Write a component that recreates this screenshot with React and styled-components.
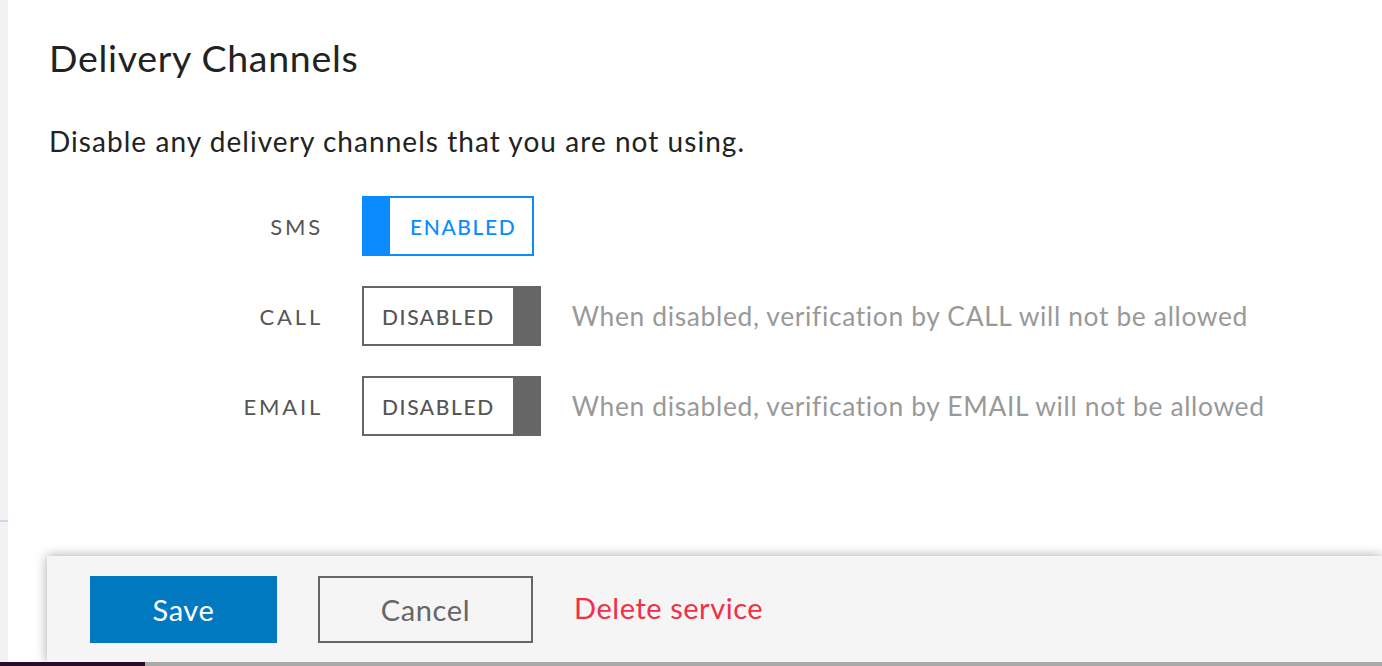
import React from "react";
import styled, { createGlobalStyle } from "styled-components";

const Global = createGlobalStyle`
  html, body { margin: 0; padding: 0; background: #fff; overflow: hidden; }
  body { font-family: Lato, "Open Sans", sans-serif; }
  * { box-sizing: border-box; }
`;

const Page = styled.div`
  width: 1382px;
  height: 666px;
  display: flex;
  flex-direction: column;
`;

const Body = styled.div`
  flex: 1;
  display: flex;
  min-height: 0;
`;

const SideStrip = styled.div`
  width: 8px;
  background: #f2f2f5;
  display: flex;
  flex-direction: column;
`;

const SideTop = styled.div`
  height: 522px;
  border-bottom: 2px solid #d4d3e2;
`;

const Main = styled.div`
  flex: 1;
  display: flex;
  flex-direction: column;
  min-width: 0;
`;

const Content = styled.div`
  flex: 1;
  padding: 34px 0 0 41px;
`;

const Title = styled.h1`
  margin: 0;
  font-size: 37.5px;
  line-height: 48px;
  font-weight: 400;
  letter-spacing: 0.7px;
  color: #222;
`;

const Intro = styled.p`
  margin: 42px 0 0;
  font-size: 28px;
  line-height: 34px;
  letter-spacing: 1.05px;
  color: #222;
`;

const Channels = styled.div`
  margin-top: 38px;
  display: flex;
  flex-direction: column;
  gap: 30px;
`;

const Row = styled.div`
  display: flex;
  align-items: center;
`;

const Label = styled.div`
  width: 274px;
  text-align: right;
  font-size: 22px;
  letter-spacing: 2.8px;
  color: #555;
  margin-right: 39px;
`;

const Toggle = styled.button`
  height: 60px;
  padding: 0;
  display: flex;
  align-items: stretch;
  background: #fff;
  border: 2px solid ${(p) => (p.$on ? "#0a8cff" : "#666")};
  cursor: pointer;
  font-family: inherit;
`;

const Knob = styled.span`
  width: 26px;
  background: ${(p) => (p.$on ? "#0a8cff" : "#666")};
`;

const ToggleText = styled.span`
  display: flex;
  align-items: center;
  padding: ${(p) => (p.$on ? "0 16px 0 20px" : "0 18px 0 18px")};
  font-size: 21px;
  letter-spacing: 1.6px;
  font-weight: 500;
  color: ${(p) => (p.$on ? "#0a8cff" : "#555")};
`;

const Hint = styled.div`
  margin-left: 31px;
  font-size: 26.4px;
  letter-spacing: 0.65px;
  color: #999;
`;

const Footer = styled.div`
  margin-left: 39px;
  height: 106px;
  background: #f5f5f5;
  box-shadow: 0 0 11px rgba(0, 0, 0, 0.35);
  display: flex;
  align-items: center;
  padding: 0 0 0 43px;
  gap: 41px;
`;

const Button = styled.button`
  height: 67px;
  width: ${(p) => p.$w}px;
  font-family: inherit;
  font-size: 29px;
  letter-spacing: 0.6px;
  cursor: pointer;
  background: ${(p) => (p.$primary ? "#0079c1" : "transparent")};
  color: ${(p) => (p.$primary ? "#fff" : "#666")};
  border: ${(p) => (p.$primary ? "none" : "2px solid #666")};
`;

const DangerLink = styled.a`
  font-size: 29px;
  letter-spacing: 0.55px;
  color: #f22f46;
  text-decoration: none;
  margin-top: -4px;
  cursor: pointer;
`;

const BottomBar = styled.div`
  height: 4px;
  display: flex;
`;

const BottomDark = styled.div`
  width: 145px;
  background: #2a0b28;
`;

const BottomGrey = styled.div`
  flex: 1;
  background: #a9a9a9;
`;

const channels = [
  { name: "SMS", on: true },
  { name: "CALL", on: false },
  { name: "EMAIL", on: false },
];

function ChannelToggle({ on }) {
  return (
    <Toggle $on={on}>
      {on && <Knob $on />}
      <ToggleText $on={on}>{on ? "ENABLED" : "DISABLED"}</ToggleText>
      {!on && <Knob />}
    </Toggle>
  );
}

export default function App() {
  return (
    <>
      <Global />
      <Page>
        <Body>
          <SideStrip>
            <SideTop />
          </SideStrip>
          <Main>
            <Content>
              <Title>Delivery Channels</Title>
              <Intro>Disable any delivery channels that you are not using.</Intro>
              <Channels>
                {channels.map((c) => (
                  <Row key={c.name}>
                    <Label>{c.name}</Label>
                    <ChannelToggle on={c.on} />
                    {!c.on && (
                      <Hint>
                        When disabled, verification by {c.name} will not be allowed
                      </Hint>
                    )}
                  </Row>
                ))}
              </Channels>
            </Content>
            <Footer>
              <Button $primary $w={187}>Save</Button>
              <Button $w={215}>Cancel</Button>
              <DangerLink>Delete service</DangerLink>
            </Footer>
          </Main>
        </Body>
        <BottomBar>
          <BottomDark />
          <BottomGrey />
        </BottomBar>
      </Page>
    </>
  );
}
